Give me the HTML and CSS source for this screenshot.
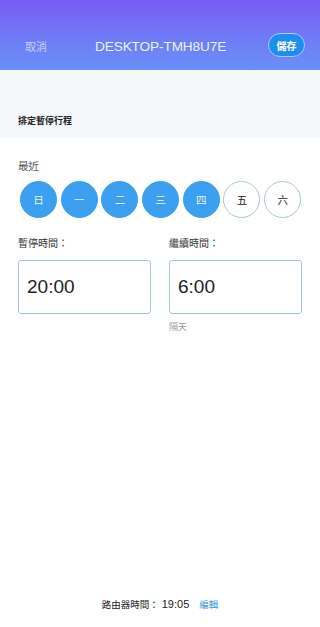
FILE: index.html
```
<!DOCTYPE html>
<html lang="zh-Hant">
<head>
<meta charset="utf-8">
<link rel="stylesheet" href="styles.css">
</head>
<body>
<div class="page">
  <header class="header">
    <span class="cancel">取消</span>
    <span class="title">DESKTOP-TMH8U7E</span>
    <span class="save">儲存</span>
  </header>
  <section class="band">
    <div class="band-title">排定暫停行程</div>
  </section>
  <main class="content">
    <div class="recent">最近</div>
    <div class="days">
      <span class="day on">日</span>
      <span class="day on">一</span>
      <span class="day on">二</span>
      <span class="day on">三</span>
      <span class="day on">四</span>
      <span class="day">五</span>
      <span class="day">六</span>
    </div>
    <div class="times">
      <div class="col">
        <div class="label">暫停時間：</div>
        <div class="box">20:00</div>
      </div>
      <div class="col">
        <div class="label">繼續時間：</div>
        <div class="box">6:00</div>
        <div class="note">隔天</div>
      </div>
    </div>
  </main>
  <footer class="footer">
    <span class="ft-label">路由器時間：</span><span class="ft-time">19:05</span><span class="ft-edit">編輯</span>
  </footer>
</div>
</body>
</html>
```
FILE: styles.css
```
* { box-sizing: border-box; margin: 0; padding: 0; }
html, body { width: 320px; height: 627px; background: #fff; }
body {
  font-family: "Liberation Sans", "Noto Sans CJK TC", sans-serif;
  color: #333;
}
.page { display: flex; flex-direction: column; height: 627px; }
.header {
  height: 70px;
  background: linear-gradient(180deg, #7a5bf6 0%, #6e7ef6 60%, #6a8ff7 100%);
  display: flex;
  align-items: center;
  padding: 22px 15px 0 25px;
}
.cancel { font-size: 11px; color: #c9cff2; width: 70px; flex: none; }
.title {
  flex: 1;
  text-align: left;
  white-space: nowrap;
  font-size: 13.6px;
  color: #eef0fc;
  letter-spacing: -0.1px;
}
.save {
  flex: none;
  width: 37px;
  height: 24px;
  border-radius: 12px;
  background: #1b8ff0;
  border: 1px solid #b3c6fb;
  color: #fff;
  font-weight: bold;
  font-size: 10px;
  display: flex;
  align-items: center;
  justify-content: center;
  margin-top: -2px;
}
.band {
  height: 68px;
  background: #f5f8fa;
  display: flex;
  align-items: flex-end;
  padding: 0 18px 11px;
}
.band-title { font-size: 9px; font-weight: bold; color: #222; }
.content { padding: 0 18px; flex: 1; }
.recent { margin-top: 21px; font-size: 10.5px; color: #555; line-height: 14px; }
.days {
  display: flex;
  gap: 3.7px;
  margin-top: 8px;
  padding-left: 2px;
}
.day {
  width: 37px;
  height: 37px;
  border-radius: 50%;
  border: 1px solid #a9c7d6;
  display: flex;
  align-items: center;
  justify-content: center;
  font-size: 10.5px;
  color: #222;
  background: #fff;
}
.day.on { background: #3d9fef; border-color: #3d9fef; color: #e4f1fd; }
.times { display: flex; gap: 18px; margin-top: 19px; }
.col { flex: 1; }
.label { font-size: 10px; color: #333; line-height: 14px; }
.box {
  margin-top: 9px;
  height: 54px;
  border: 1px solid #a3c5d6;
  border-radius: 3px;
  display: flex;
  align-items: center;
  padding-left: 8px;
  font-size: 19px;
  color: #222;
}
.note { font-size: 9px; color: #9a9a9a; margin-top: 6px; }
.footer {
  height: 30px;
  display: flex;
  justify-content: center;
  align-items: baseline;
  font-size: 9.5px;
  color: #222;
  padding-left: 0;
}
.ft-label { font-size: 9.5px; }
.ft-time { font-size: 11px; margin-left: 3px; }
.ft-edit { color: #3a97e5; margin-left: 10px; }
```
